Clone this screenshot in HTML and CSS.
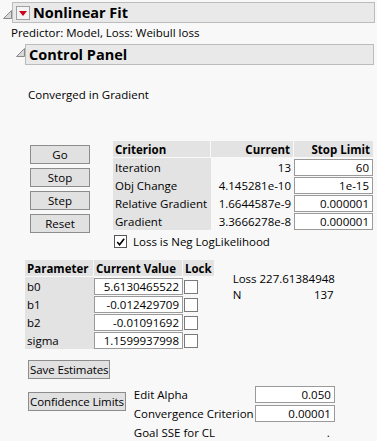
FILE: index.html
```html
<!DOCTYPE html>
<html lang="en">
<head>
    <meta charset="UTF-8">
    <title>Nonlinear Fit</title>
    <link rel="stylesheet" href="styles.css">
</head>
<body>
    <div class="report">
        <div class="outline-head">
            <svg class="disclose" width="9" height="9" viewBox="0 0 9 9"><polygon points="8.5,0.5 8.5,8.5 0.5,8.5" fill="#d8d8d8" stroke="#8a8a8a"/></svg>
            <div class="title-box">
                <span class="menu-btn">
                    <svg width="14" height="14" viewBox="0 0 14 14"><rect x="0.5" y="0.5" width="13" height="13" fill="#f4f4f4" stroke="#a0a0a0"/><polygon points="3,5 11,5 7,10" fill="#d0021b"/></svg>
                </span>
                <span class="title">Nonlinear Fit</span>
            </div>
        </div>
        <div class="subtitle">Predictor: Model, Loss: Weibull loss</div>

        <div class="outline-head sub">
            <svg class="disclose" width="9" height="9" viewBox="0 0 9 9"><polygon points="8.5,0.5 8.5,8.5 0.5,8.5" fill="#d8d8d8" stroke="#8a8a8a"/></svg>
            <div class="title-box">
                <span class="title small">Control Panel</span>
            </div>
        </div>

        <div class="panel">
            <div class="status">Converged in Gradient</div>

            <div class="run-row">
                <div class="buttons">
                    <button class="btn">Go</button>
                    <button class="btn">Stop</button>
                    <button class="btn">Step</button>
                    <button class="btn">Reset</button>
                </div>
                <div class="crit-col">
                    <table class="grid crit">
                        <tr>
                            <th class="c1">Criterion</th>
                            <th class="c2 num">Current</th>
                            <th class="c3 num">Stop Limit</th>
                        </tr>
                        <tr><td class="label">Iteration</td><td class="num">13</td><td><input class="field" value="60"></td></tr>
                        <tr><td class="label">Obj Change</td><td class="num">4.145281e-10</td><td><input class="field" value="1e-15"></td></tr>
                        <tr><td class="label">Relative Gradient</td><td class="num">1.6644587e-9</td><td><input class="field" value="0.000001"></td></tr>
                        <tr><td class="label">Gradient</td><td class="num">3.3666278e-8</td><td><input class="field" value="0.000001"></td></tr>
                    </table>
                    <label class="check-line">
                        <span class="box checked">
                            <svg width="12" height="12" viewBox="0 0 12 12"><path d="M2.5 6 L5 9 L10 2.5" fill="none" stroke="#000" stroke-width="1.8"/></svg>
                        </span>
                        Loss is Neg LogLikelihood
                    </label>
                </div>
            </div>

            <div class="param-row">
                <table class="grid params">
                    <tr>
                        <th class="p1">Parameter</th>
                        <th class="p2">Current Value</th>
                        <th class="p3">Lock</th>
                    </tr>
                    <tr><td class="label">b0</td><td><input class="field" value="5.6130465522"></td><td><span class="box"></span></td></tr>
                    <tr><td class="label">b1</td><td><input class="field" value="-0.012429709"></td><td><span class="box"></span></td></tr>
                    <tr><td class="label">b2</td><td><input class="field" value="-0.01091692"></td><td><span class="box"></span></td></tr>
                    <tr><td class="label">sigma</td><td><input class="field" value="1.1599937998"></td><td><span class="box"></span></td></tr>
                </table>
                <div class="summary">
                    <div class="sum-line">Loss 227.61384948</div>
                    <div class="sum-line spread"><span>N</span><span>137</span></div>
                </div>
            </div>

            <button class="btn wide">Save Estimates</button>

            <div class="conf-row">
                <button class="btn wide">Confidence Limits</button>
                <div class="conf-fields">
                    <div class="conf-line"><span>Edit Alpha</span><input class="field" value="0.050"></div>
                    <div class="conf-line"><span>Convergence Criterion</span><input class="field" value="0.00001"></div>
                    <div class="conf-line"><span>Goal SSE for CL</span><span class="dot">.</span></div>
                </div>
            </div>
        </div>
    </div>
</body>
</html>
```

FILE: styles.css
```css
body {
    margin: 0;
    background-color: #f8f8f8;
    color: #000;
    font-family: "Open Sans", "Noto Sans", sans-serif;
    font-size: 11.5px;
}
.report {
    padding: 2px 2px 0 2px;
}
.outline-head {
    display: flex;
    align-items: flex-start;
}
.disclose {
    margin: 8px 0 0 1px;
    flex: none;
}
.title-box {
    flex: 1;
    height: 19px;
    border: 1px solid #bcbcbc;
    background-color: #e9e9e9;
    display: flex;
    align-items: center;
}
.menu-btn {
    display: flex;
    margin-left: 3px;
}
.title {
    font-weight: bold;
    font-size: 14.5px;
    margin-left: 3px;
    line-height: 19px;
}
.title.small {
    font-size: 14.5px;
    margin-left: 3px;
}
.subtitle {
    margin: 2px 0 0 9px;
    line-height: 15px;
}
.outline-head.sub {
    margin: 4px 1px 0 13px;
}
.outline-head.sub .disclose {
    margin-top: 4px;
}
.panel {
    padding-left: 26px;
}
.status {
    margin-top: 22px;
    line-height: 16px;
}
.run-row {
    display: flex;
    margin-top: 38px;
}
.buttons {
    display: flex;
    flex-direction: column;
    gap: 4px;
    margin: 4px 0 0 2px;
}
.btn {
    font: inherit;
    width: 60px;
    height: 19px;
    padding: 0 2px;
    background-color: #e1e1e1;
    border: 1px solid #8c8c8c;
    border-radius: 0;
    color: #000;
    line-height: 15px;
}
.btn.wide {
    width: auto;
    padding: 0 1px;
    letter-spacing: -0.1px;
}
.crit-col {
    margin-left: 23px;
}
.grid {
    border-collapse: separate;
    border-spacing: 0;
}
.grid th {
    background-color: #e3e3e3;
    font-weight: bold;
    text-align: left;
    height: 16px;
    padding: 0 2px;
    line-height: 15px;
    border-right: 1px solid #f8f8f8;
    border-bottom: 1px solid #f8f8f8;
}
.grid th:last-child {
    border-right: none;
}
.grid td {
    height: 18px;
    padding: 0;
    line-height: 15px;
}
.grid td.label {
    background-color: #e3e3e3;
    padding-left: 2px;
}
.grid .num {
    text-align: right;
    padding-right: 3px;
}
.crit .c1 { width: 93px; }
.crit .c2 { width: 77px; }
.crit .c3 { width: 73px; }
.field {
    font: inherit;
    display: block;
    box-sizing: border-box;
    width: 100%;
    height: 17px;
    margin: 0;
    padding: 0 3px;
    border: 1px solid #9a9a9a;
    background-color: #fff;
    text-align: right;
    color: #000;
}
.crit td .field {
    width: 79px;
}
.check-line {
    display: flex;
    align-items: center;
    gap: 6px;
    margin: 4px 0 0 1px;
    line-height: 15px;
}
.box {
    display: inline-block;
    box-sizing: border-box;
    width: 13px;
    height: 13px;
    border: 1px solid #555;
    background-color: #fff;
    vertical-align: middle;
}
.box.checked {
    display: flex;
}
.param-row {
    display: flex;
    margin-top: 11px;
    margin-left: -3px;
}
.params .p1 { width: 64px; }
.params .p2 { width: 84px; }
.params .p3 { width: 26px; }
.params td .field {
    width: 89px;
}
.params td .box {
    width: 14px;
    height: 14px;
    margin-left: 1px;
    border-color: #7a7a7a;
}
.summary {
    margin: 11px 0 0 19px;
    width: 101px;
}
.sum-line {
    line-height: 16px;
    white-space: nowrap;
}
.sum-line.spread {
    display: flex;
    justify-content: space-between;
}
.param-row + .btn.wide {
    margin-top: 11px;
}
.conf-row {
    display: flex;
    align-items: flex-start;
    margin-top: 6px;
}
.conf-row .btn {
    margin-top: 7px;
}
.conf-fields {
    margin-left: 8px;
    width: 201px;
}
.conf-line {
    display: flex;
    justify-content: space-between;
    align-items: center;
    height: 19px;
}
.conf-line .field {
    width: 80px;
}
.conf-line .dot {
    padding-right: 5px;
}
```
